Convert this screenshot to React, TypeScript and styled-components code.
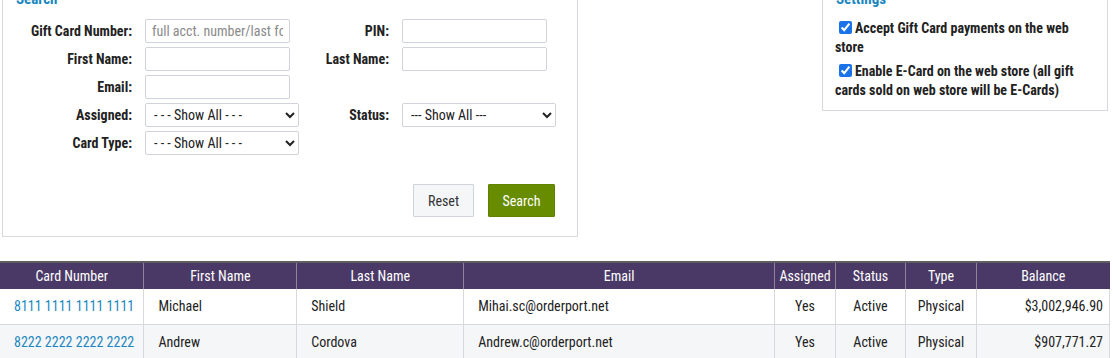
import { FC } from "react";
import styled, { createGlobalStyle } from "styled-components";

const GlobalStyle = createGlobalStyle`
  html, body {
    margin: 0;
    padding: 0;
    background: #ffffff;
    overflow: hidden;
  }
  body {
    font-family: "Roboto Condensed", "Liberation Sans Narrow", "DejaVu Sans Condensed", Roboto, sans-serif;
    font-stretch: condensed;
    font-size: 14px;
    color: #222222;
  }
  * {
    box-sizing: border-box;
  }
`;

const Page = styled.div`
  display: flex;
  flex-direction: column;
  gap: 24px;
  margin-top: -10px;
  width: 1110px;
`;

const TopRow = styled.div`
  display: flex;
  justify-content: space-between;
  align-items: flex-start;
  padding: 0 2px 0 2px;
`;

const Fieldset = styled.fieldset<{ $width: number; $bottom: number }>`
  width: ${(p) => p.$width}px;
  min-width: 0;
  margin: 0;
  border: 1px solid #d6d9de;
  padding: 0 0 ${(p) => p.$bottom}px 0;
`;

const Legend = styled.legend`
  margin-left: 10px;
  padding: 0 3px;
  font-weight: 700;
  font-size: 15px;
  color: #1b87c0;
`;

const FormGrid = styled.div`
  display: grid;
  grid-template-columns: 142px 154px 103px 154px;
  row-gap: 4px;
  padding-top: 11px;
`;

const Label = styled.label`
  font-weight: 700;
  text-align: right;
  padding-right: 13px;
  line-height: 24px;
`;

const TextInput = styled.input`
  width: 145px;
  height: 24px;
  border: 1px solid #d0d4da;
  border-radius: 2px;
  padding: 0 6px;
  font: inherit;
  color: #222;
  &::placeholder {
    color: #8a8a8a;
  }
`;

const Select = styled.select`
  width: 154px;
  height: 24px;
  border: 1px solid #d0d4da;
  border-radius: 2px;
  padding: 0 4px;
  font: inherit;
  color: #222;
  background: #fff;
`;

const Empty = styled.div``;

const Actions = styled.div`
  display: flex;
  justify-content: flex-end;
  gap: 14px;
  padding: 29px 22px 0 0;
`;

const Button = styled.button<{ $primary?: boolean }>`
  width: ${(p) => (p.$primary ? 67 : 61)}px;
  height: 33px;
  padding: 0;
  font: inherit;
  border: 1px solid ${(p) => (p.$primary ? "#5f8200" : "#d0d4da")};
  background: ${(p) => (p.$primary ? "#678c00" : "#f5f6f8")};
  color: ${(p) => (p.$primary ? "#ffffff" : "#333333")};
  border-radius: 1px;
`;

const SettingsList = styled.div`
  display: flex;
  flex-direction: column;
  gap: 5px;
  padding: 11px 10px 0 12px;
`;

const CheckRow = styled.label`
  font-weight: 700;
  line-height: 19px;
  & input {
    margin: 0 3px 0 4px;
    width: 13px;
    height: 13px;
    vertical-align: -1px;
    accent-color: #1a73e8;
  }
`;

const Table = styled.table`
  width: 1110px;
  border-collapse: collapse;
`;

const Th = styled.th<{ $w: number }>`
  width: ${(p) => p.$w}px;
  height: 27px;
  background: #4a3966;
  color: #ffffff;
  font-weight: 400;
  text-align: center;
  border-left: 1px solid #8c8496;
  border-top: 2px solid #5e5e5e;
  padding: 0;
  &:first-child {
    border-left: none;
  }
`;

const Tr = styled.tr<{ $alt?: boolean }>`
  background: ${(p) => (p.$alt ? "#f5f6f8" : "#ffffff")};
`;

const Td = styled.td<{ $align?: "left" | "center" | "right" }>`
  height: 35px;
  border: 1px solid #d6d9de;
  border-top: none;
  padding: 0 ${(p) => (p.$align === "right" ? 6 : 7)}px 0 ${(p) =>
      p.$align === "left" ? 14 : 7}px;
  text-align: ${(p) => p.$align || "left"};
  &:first-child {
    border-left: none;
  }
`;

const CardLink = styled.a`
  color: #1b87c0;
  text-decoration: none;
`;

type Column = { title: string; width: number; align: "left" | "center" | "right" };

const columns: Column[] = [
  { title: "Card Number", width: 144, align: "left" },
  { title: "First Name", width: 153, align: "left" },
  { title: "Last Name", width: 167, align: "left" },
  { title: "Email", width: 311, align: "left" },
  { title: "Assigned", width: 61, align: "center" },
  { title: "Status", width: 70, align: "center" },
  { title: "Type", width: 71, align: "center" },
  { title: "Balance", width: 133, align: "right" },
];

type Card = {
  number: string;
  first: string;
  last: string;
  email: string;
  assigned: string;
  status: string;
  type: string;
  balance: string;
};

const cards: Card[] = [
  {
    number: "8111 1111 1111 1111",
    first: "Michael",
    last: "Shield",
    email: "Mihai.sc@orderport.net",
    assigned: "Yes",
    status: "Active",
    type: "Physical",
    balance: "$3,002,946.90",
  },
  {
    number: "8222 2222 2222 2222",
    first: "Andrew",
    last: "Cordova",
    email: "Andrew.c@orderport.net",
    assigned: "Yes",
    status: "Active",
    type: "Physical",
    balance: "$907,771.27",
  },
];

const SearchBox: FC = () => (
  <Fieldset $width={576} $bottom={19}>
    <Legend>Search</Legend>
    <FormGrid>
      <Label>Gift Card Number:</Label>
      <TextInput placeholder="full acct. number/last four" />
      <Label>PIN:</Label>
      <TextInput />

      <Label>First Name:</Label>
      <TextInput />
      <Label>Last Name:</Label>
      <TextInput />

      <Label>Email:</Label>
      <TextInput />
      <Empty />
      <Empty />

      <Label>Assigned:</Label>
      <Select defaultValue="all">
        <option value="all">- - - Show All - - -</option>
      </Select>
      <Label>Status:</Label>
      <Select defaultValue="all">
        <option value="all">--- Show All ---</option>
      </Select>

      <Label>Card Type:</Label>
      <Select defaultValue="all">
        <option value="all">- - - Show All - - -</option>
      </Select>
    </FormGrid>
    <Actions>
      <Button>Reset</Button>
      <Button $primary>Search</Button>
    </Actions>
  </Fieldset>
);

const SettingsBox: FC = () => (
  <Fieldset $width={286} $bottom={10}>
    <Legend>Settings</Legend>
    <SettingsList>
      <CheckRow>
        <input type="checkbox" defaultChecked />
        Accept Gift Card payments on the web store
      </CheckRow>
      <CheckRow>
        <input type="checkbox" defaultChecked />
        Enable E-Card on the web store (all gift cards sold on web store will be
        E-Cards)
      </CheckRow>
    </SettingsList>
  </Fieldset>
);

export default function App() {
  return (
    <>
      <GlobalStyle />
      <Page>
        <TopRow>
          <SearchBox />
          <SettingsBox />
        </TopRow>
        <Table>
          <thead>
            <tr>
              {columns.map((c) => (
                <Th key={c.title} $w={c.width}>
                  {c.title}
                </Th>
              ))}
            </tr>
          </thead>
          <tbody>
            {cards.map((card, i) => (
              <Tr key={card.number} $alt={i % 2 === 1}>
                <Td $align="left">
                  <CardLink href="#">{card.number}</CardLink>
                </Td>
                <Td $align="left">{card.first}</Td>
                <Td $align="left">{card.last}</Td>
                <Td $align="left">{card.email}</Td>
                <Td $align="center">{card.assigned}</Td>
                <Td $align="center">{card.status}</Td>
                <Td $align="center">{card.type}</Td>
                <Td $align="right">{card.balance}</Td>
              </Tr>
            ))}
          </tbody>
        </Table>
      </Page>
    </>
  );
}
